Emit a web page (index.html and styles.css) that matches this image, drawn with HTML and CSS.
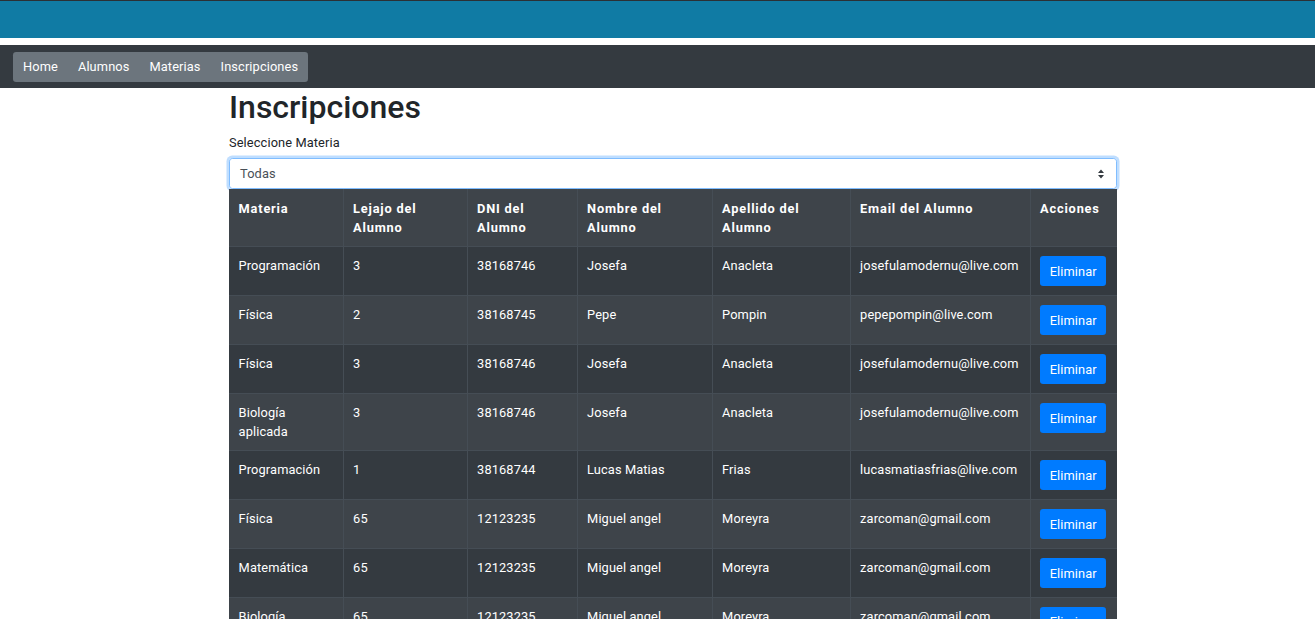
FILE: index.html
```html
<!DOCTYPE html>
<html lang="es">
<head>
<meta charset="utf-8">
<title>Inscripciones</title>
<link rel="stylesheet" href="styles.css">
</head>
<body>
<div class="topbar"></div>
<nav class="navbar">
  <div class="btn-group">
    <a class="nav-btn">Home</a>
    <a class="nav-btn">Alumnos</a>
    <a class="nav-btn">Materias</a>
    <a class="nav-btn">Inscripciones</a>
  </div>
</nav>
<main class="container">
  <h1 class="title">Inscripciones</h1>
  <label class="label">Seleccione Materia</label>
  <div class="select">
    <span>Todas</span>
    <svg class="caret" width="8" height="10" viewBox="0 0 8 10"><path d="M4 0.5 L7 4 H1 Z M4 9.5 L7 6 H1 Z" fill="#343a40"/></svg>
  </div>
  <table class="table">
    <colgroup>
      <col style="width:114px"><col style="width:124px"><col style="width:110px"><col style="width:135px"><col style="width:138px"><col style="width:180px"><col style="width:87px">
    </colgroup>
    <tbody>
      <tr class="head"><th>Materia</th><th>Lejajo del Alumno</th><th>DNI del Alumno</th><th>Nombre del Alumno</th><th>Apellido del Alumno</th><th>Email del Alumno</th><th>Acciones</th></tr>
      <tr><td>Programación</td><td>3</td><td>38168746</td><td>Josefa</td><td>Anacleta</td><td>josefulamodernu@live.com</td><td><button class="btn">Eliminar</button></td></tr>
      <tr><td>Física</td><td>2</td><td>38168745</td><td>Pepe</td><td>Pompin</td><td>pepepompin@live.com</td><td><button class="btn">Eliminar</button></td></tr>
      <tr><td>Física</td><td>3</td><td>38168746</td><td>Josefa</td><td>Anacleta</td><td>josefulamodernu@live.com</td><td><button class="btn">Eliminar</button></td></tr>
      <tr><td>Biología aplicada</td><td>3</td><td>38168746</td><td>Josefa</td><td>Anacleta</td><td>josefulamodernu@live.com</td><td><button class="btn">Eliminar</button></td></tr>
      <tr><td>Programación</td><td>1</td><td>38168744</td><td>Lucas Matias</td><td>Frias</td><td>lucasmatiasfrias@live.com</td><td><button class="btn">Eliminar</button></td></tr>
      <tr><td>Física</td><td>65</td><td>12123235</td><td>Miguel angel</td><td>Moreyra</td><td>zarcoman@gmail.com</td><td><button class="btn">Eliminar</button></td></tr>
      <tr><td>Matemática</td><td>65</td><td>12123235</td><td>Miguel angel</td><td>Moreyra</td><td>zarcoman@gmail.com</td><td><button class="btn">Eliminar</button></td></tr>
      <tr><td>Biología aplicada</td><td>65</td><td>12123235</td><td>Miguel angel</td><td>Moreyra</td><td>zarcoman@gmail.com</td><td><button class="btn">Eliminar</button></td></tr>
    </tbody>
  </table>
</main>
</body>
</html>
```
FILE: styles.css
```css
html, body {
  margin: 0;
  padding: 0;
}
body {
  font-family: Roboto, "Liberation Sans", sans-serif;
  font-size: 12.8px;
  line-height: 19.2px;
  letter-spacing: 0.12px;
  color: #212529;
  background: #fff;
}
.topbar {
  height: 38px;
  background: #107ba4;
  border-top: 1px solid #2b3035;
  box-sizing: border-box;
  margin-bottom: 7px;
}
.navbar {
  background: #343a40;
  height: 43px;
  box-sizing: border-box;
  padding: 7px 13px;
  display: flex;
  align-items: flex-start;
}
.btn-group {
  display: flex;
  background: #6c757d;
  border-radius: 3.2px;
  height: 29.6px;
  align-items: center;
}
.nav-btn {
  color: #fff;
  padding: 0 10px;
  font-size: 12.8px;
  line-height: 19.2px;
  text-decoration: none;
}
.container {
  width: 888px;
  margin-left: calc(50% - 428.5px);
}
.title {
  font-size: 32px;
  font-weight: 500;
  line-height: 38.4px;
  letter-spacing: 0;
  margin: 0 0 6.4px;
  color: #212529;
}
.label {
  display: block;
  margin-bottom: 6.4px;
}
.select {
  height: 31px;
  box-sizing: border-box;
  border: 1px solid #80bdff;
  border-radius: 3.2px;
  box-shadow: 0 0 0 2.5px rgba(0, 123, 255, 0.25);
  padding: 0 10px;
  display: flex;
  align-items: center;
  justify-content: space-between;
  color: #495057;
}
.caret {
  margin-right: 1px;
}
.table {
  width: 888px;
  border-collapse: collapse;
  table-layout: fixed;
  color: #fff;
  background: #343a40;
  margin-top: 0;
}
.table th, .table td {
  padding: 8.6px 9.6px 9px;
  text-align: left;
  vertical-align: top;
  border-top: 1px solid #454d55;
  border-left: 1px solid #454d55;
}
.table th:first-child, .table td:first-child {
  border-left: 0;
}
.table tr:first-child th {
  border-top: 0;
  padding-top: 9.6px;
}
.table th {
  font-weight: 700;
  letter-spacing: 0.8px;
}
.table tr:nth-child(odd) {
  background: #3e444a;
}
.btn {
  display: block;
  font-family: inherit;
  font-size: 12.8px;
  line-height: 19.2px;
  letter-spacing: 0.1px;
  height: 30.4px;
  padding: 0 9.6px;
  border: 0;
  border-radius: 3.2px;
  background: #007bff;
  color: #fff;
}
```
